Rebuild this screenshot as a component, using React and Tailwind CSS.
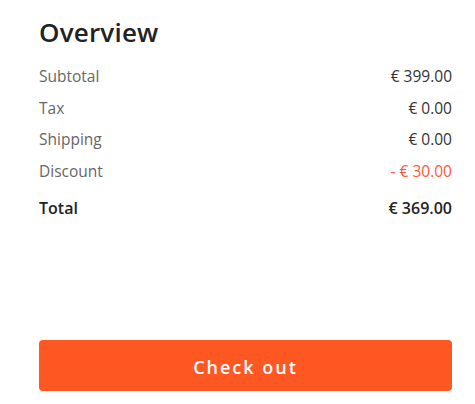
export default function App() {
  const rows = [
    ["Subtotal", "€ 399.00", false],
    ["Tax", "€ 0.00", false],
    ["Shipping", "€ 0.00", false],
    ["Discount", "- € 30.00", true],
  ];
  return (
    <div className="w-[475px] h-[404px] bg-white pl-[39px] pr-[23px] pt-[14px] flex flex-col" style={{ fontFamily: '"Open Sans", "Noto Sans", sans-serif' }}>
      <h1 className="text-[26px] font-semibold text-[#222] leading-[36px] tracking-[0.2px]">Overview</h1>
      <div className="mt-[11px] flex flex-col">
        {rows.map(([l, v, red]) => (
          <div key={l} className="flex justify-between items-center h-[31.5px] text-[15.5px]">
            <span className="text-[#666]">{l}</span>
            <span className={red ? "text-[#ff5733]" : "text-[#333]"}>{v}</span>
          </div>
        ))}
        <div className="flex justify-between items-center h-[42px] text-[16px] font-semibold text-[#222]">
          <span>Total</span>
          <span>€ 369.00</span>
        </div>
      </div>
      <button className="mt-auto mb-[13px] h-[51px] w-full rounded-[4px] bg-[#ff5722] text-white text-[18px] font-semibold tracking-[2px] pt-[4px]">
        Check out
      </button>
    </div>
  );
}
